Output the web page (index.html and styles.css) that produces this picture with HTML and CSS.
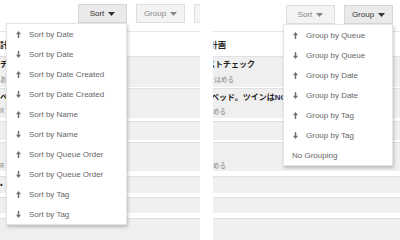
FILE: index.html
```html
<!DOCTYPE html>
<html lang="ja">
<head>
<meta charset="utf-8">
<title>Sort and Group menus</title>
<link rel="stylesheet" href="styles.css">
</head>
<body>
<svg class="defs" width="0" height="0" aria-hidden="true">
  <symbol id="up" viewBox="0 0 5 7"><polygon points="2.5,0 5,3.2 0,3.2"/><rect x="1.8" y="3" width="1.4" height="4"/></symbol>
  <symbol id="down" viewBox="0 0 5 7"><polygon points="2.5,7 5,3.8 0,3.8"/><rect x="1.8" y="0" width="1.4" height="4"/></symbol>
  <symbol id="caret" viewBox="0 0 7 4"><polygon points="0,0 7,0 3.5,4"/></symbol>
</svg>
<div class="wrap">
  <section class="panel panel-left">
    <div class="toolbar">
      <div class="btn active">Sort <svg class="caret"><use href="#caret"/></svg></div>
      <div class="btn">Group <svg class="caret"><use href="#caret"/></svg></div>
      <div class="btn" aria-label="View"></div>
    </div>
    <div class="list">
      <div class="head">計画</div>
      <div class="row r1"><div class="title">チェックイン</div><div class="sub">あ</div></div>
      <div class="row r2"><div class="title">ベッド</div><div class="sub">R</div></div>
      <div class="row r3"></div>
      <div class="row r4"><div class="sub">R</div></div>
      <div class="row r5"><div class="dot">•</div></div>
      <div class="row r6"></div>
      <div class="row r7"></div>
    </div>
    <ul class="menu menu-sort">
      <li><svg class="ico"><use href="#up"/></svg>Sort by Date</li>
      <li><svg class="ico"><use href="#down"/></svg>Sort by Date</li>
      <li><svg class="ico"><use href="#up"/></svg>Sort by Date Created</li>
      <li><svg class="ico"><use href="#down"/></svg>Sort by Date Created</li>
      <li><svg class="ico"><use href="#up"/></svg>Sort by Name</li>
      <li><svg class="ico"><use href="#down"/></svg>Sort by Name</li>
      <li><svg class="ico"><use href="#up"/></svg>Sort by Queue Order</li>
      <li><svg class="ico"><use href="#down"/></svg>Sort by Queue Order</li>
      <li><svg class="ico"><use href="#up"/></svg>Sort by Tag</li>
      <li><svg class="ico"><use href="#down"/></svg>Sort by Tag</li>
    </ul>
  </section>
  <section class="panel panel-right">
    <div class="toolbar">
      <div class="btn">Sort <svg class="caret"><use href="#caret"/></svg></div>
      <div class="btn active">Group <svg class="caret"><use href="#caret"/></svg></div>
    </div>
    <div class="list">
      <div class="head"><span class="cut3">計画</span></div>
      <div class="row r1"><div class="title"><span class="cut6">ストチェック</span></div><div class="sub"><span class="cut5">をはめる</span></div></div>
      <div class="row r2"><div class="title"><span class="cut2">ベッド。ツインは<b class="ng">NG</b></span></div><div class="sub">める</div></div>
      <div class="row r3"></div>
      <div class="row r4"><div class="sub">める</div></div>
      <div class="row r5"></div>
      <div class="row r6"></div>
      <div class="row r7"></div>
    </div>
    <ul class="menu menu-group">
      <li><svg class="ico"><use href="#up"/></svg>Group by Queue</li>
      <li><svg class="ico"><use href="#down"/></svg>Group by Queue</li>
      <li><svg class="ico"><use href="#up"/></svg>Group by Date</li>
      <li><svg class="ico"><use href="#down"/></svg>Group by Date</li>
      <li><svg class="ico"><use href="#up"/></svg>Group by Tag</li>
      <li><svg class="ico"><use href="#down"/></svg>Group by Tag</li>
      <li class="plain">No Grouping</li>
    </ul>
  </section>
</div>
</body>
</html>
```

FILE: styles.css
```css
* { box-sizing: border-box; }
html, body { margin: 0; padding: 0; background: #fff; }
body {
  width: 400px;
  height: 240px;
  overflow: hidden;
  font-family: "Liberation Sans", "Noto Sans CJK JP", Arial, sans-serif;
  font-size: 8px;
  color: #333;
}
.defs { position: absolute; width: 0; height: 0; }
.wrap { display: flex; width: 400px; height: 240px; }
.panel {
  position: relative;
  width: 200px;
  height: 240px;
  overflow: hidden;
}
.toolbar {
  height: 31px;
  display: flex;
  gap: 9px;
  padding-top: 4px;
}
.panel-left .toolbar { padding-left: 78px; }
.panel-right .toolbar { padding-left: 86px; padding-top: 5px; }
.btn {
  flex: none;
  width: 49px;
  height: 19px;
  display: flex;
  align-items: center;
  justify-content: center;
  gap: 4px;
  background: #f3f3f3;
  border: 1px solid #dedede;
  color: #888;
  font-size: 8px;
}
.btn.active { background: #eaeaea; border-color: #d6d6d6; color: #333; }
.caret { width: 7px; height: 4px; fill: currentColor; }

.list { border-top: 1px solid #e6e6e6; }
.panel-right .list { margin-left: 13px; overflow: hidden; }
.head {
  height: 24px;
  display: flex;
  align-items: center;
  font-family: "Noto Sans CJK JP", sans-serif;
  font-weight: bold;
  font-size: 8px;
  color: #222;
  white-space: nowrap;
}
.row {
  background: #efefef;
  border-top: 1px solid #e0e0e0;
  white-space: nowrap;
  font-family: "Noto Sans CJK JP", sans-serif;
}
.r1 { height: 31px; padding-top: 1px; }
.r2 { height: 30px; margin-top: 1px; padding-top: 2px; }
.r3 { height: 19px; margin-top: 3px; }
.r4 { height: 29px; margin-top: 2px; padding-top: 17px; }
.r5 { height: 17px; margin-top: 5px; }
.r6 { height: 16px; margin-top: 4px; }
.r7 { height: 30px; margin-top: 5px; }
.title { font-weight: bold; font-size: 8px; line-height: 11px; color: #222; }
.sub { font-size: 6.5px; line-height: 10px; color: #888; }
.r1 .sub { margin-top: 5px; }
.r2 .sub { margin-top: 3px; }
.dot { font-size: 8px; line-height: 14px; color: #222; }
.ng { color: #2a2a50; font-family: "Liberation Sans", sans-serif; }
.cut2 { margin-left: -2px; }
.cut3 { margin-left: -3px; }
.cut5 { margin-left: -5px; }
.cut6 { margin-left: -6px; }

.menu {
  position: absolute;
  margin: 0;
  padding: 0;
  list-style: none;
  background: #fff;
  border: 1px solid rgba(0,0,0,0.1);
  box-shadow: 1px 2px 3px rgba(0,0,0,0.22);
}
.menu-sort { left: 6px; top: 23px; width: 121px; }
.menu-group { left: 83px; top: 24px; width: 110px; }
.menu li {
  height: 20px;
  display: flex;
  align-items: center;
  gap: 8px;
  padding-left: 9px;
  color: #666;
  font-size: 8px;
  white-space: nowrap;
}
.menu li.plain { padding-left: 8px; }
.ico { width: 5px; height: 7px; fill: #6e6e6e; flex: none; }
```
